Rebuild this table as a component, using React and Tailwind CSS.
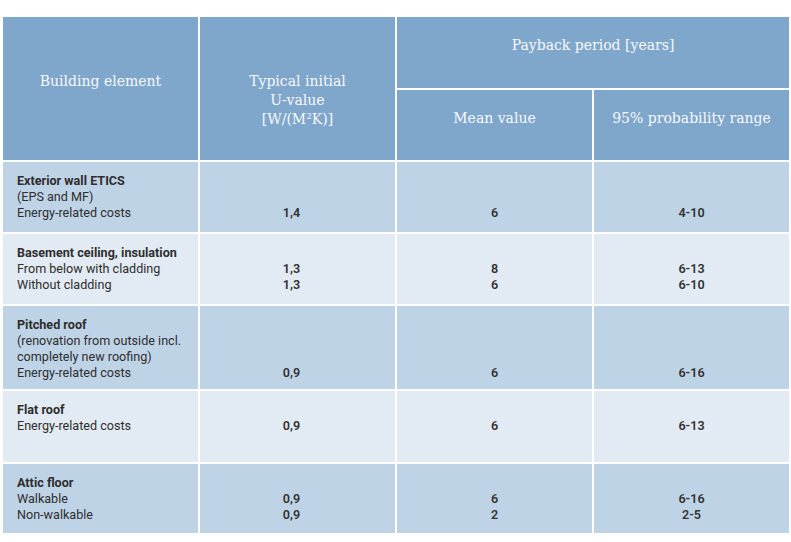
import { Fragment } from "react";

const rows = [
  {
    bg: "bg-[#bfd3e7]",
    title: "Exterior wall ETICS",
    lines: ["(EPS and MF)", "Energy-related costs"],
    u: ["", "", "1,4"],
    mean: ["", "", "6"],
    range: ["", "", "4-10"],
  },
  {
    bg: "bg-[#e2eaf3]",
    title: "Basement ceiling, insulation",
    lines: ["From below with cladding", "Without cladding"],
    u: ["", "1,3", "1,3"],
    mean: ["", "8", "6"],
    range: ["", "6-13", "6-10"],
  },
  {
    bg: "bg-[#bfd3e7]",
    title: "Pitched roof",
    lines: ["(renovation from outside incl.", "completely new roofing)", "Energy-related costs"],
    u: ["", "", "", "0,9"],
    mean: ["", "", "", "6"],
    range: ["", "", "", "6-16"],
  },
  {
    bg: "bg-[#e2eaf3]",
    title: "Flat roof",
    lines: ["Energy-related costs"],
    u: ["", "0,9"],
    mean: ["", "6"],
    range: ["", "6-13"],
  },
  {
    bg: "bg-[#bfd3e7]",
    title: "Attic floor",
    lines: ["Walkable", "Non-walkable"],
    u: ["", "0,9", "0,9"],
    mean: ["", "6", "2"],
    range: ["", "6-16", "2-5"],
  },
];

const head = "bg-[#7fa6cb] text-[#f7f9fc] text-center font-['DejaVu_Serif',serif] text-[14px] leading-[19px]";

const Values = ({ items, bg, extra = "" }) => (
  <div className={`${bg} ${extra} pt-[11px] text-center font-semibold text-[#333]`}>
    {items.map((v, i) => (
      <div key={i}>{v || "\u00a0"}</div>
    ))}
  </div>
);

const App = () => {
  return (
    <div className="w-[791px] h-[542px] bg-white pt-[17px] pl-[3px] font-['Roboto',sans-serif] text-[12.6px] leading-[16px]">
      <div className="grid grid-cols-[195px_195px_195px_195px] grid-rows-[71px_70px_70px_70px_83px_71px_69px] gap-[2px]">
        <div className={`${head} row-span-2 pt-[55px]`}>Building element</div>
        <div className={`${head} row-span-2 pt-[55px]`}>
          Typical initial
          <br />
          U-value
          <br />
          [W/(M²K)]
        </div>
        <div className={`${head} col-span-2 pt-[19px]`}>Payback period [years]</div>
        <div className={`${head} pt-[19px]`}>Mean value</div>
        <div className={`${head} pt-[19px]`}>95% probability range</div>

        {rows.map((r, i) => (
          <Fragment key={i}>
            <div className={`${r.bg} pt-[11px] px-[14px] text-[#2e2e2e]`}>
              <div className="font-bold">{r.title}</div>
              {r.lines.map((l, j) => (
                <div key={j}>{l}</div>
              ))}
            </div>
            <Values items={r.u} bg={r.bg} extra="pr-[12px]" />
            <Values items={r.mean} bg={r.bg} />
            <Values items={r.range} bg={r.bg} />
          </Fragment>
        ))}
      </div>
    </div>
  );
};

export default App;
